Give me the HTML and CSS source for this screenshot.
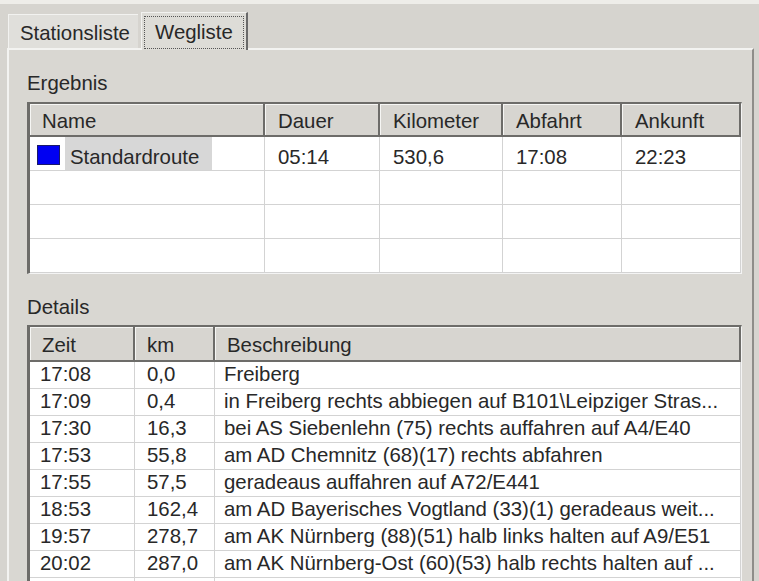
FILE: index.html
```html
<!DOCTYPE html>
<html lang="de">
<head>
<meta charset="utf-8">
<title>Wegliste</title>
<link rel="stylesheet" href="styles.css">
</head>
<body>
<div class="window">
  <div class="tabs">
    <div class="tab">Stationsliste</div>
    <div class="tab active"><span class="focus">Wegliste</span></div>
  </div>
  <div class="panel">
    <div class="label first">Ergebnis</div>
    <div class="list result">
      <div class="hd">Name</div>
      <div class="hd">Dauer</div>
      <div class="hd">Kilometer</div>
      <div class="hd">Abfahrt</div>
      <div class="hd">Ankunft</div>

      <div class="cell namecell"><span class="swatch"></span><span class="sel">Standardroute</span></div>
      <div class="cell">05:14</div>
      <div class="cell">530,6</div>
      <div class="cell">17:08</div>
      <div class="cell">22:23</div>

      <div class="cell"></div><div class="cell"></div><div class="cell"></div><div class="cell"></div><div class="cell"></div>
      <div class="cell"></div><div class="cell"></div><div class="cell"></div><div class="cell"></div><div class="cell"></div>
      <div class="cell"></div><div class="cell"></div><div class="cell"></div><div class="cell"></div><div class="cell"></div>
    </div>

    <div class="label">Details</div>
    <div class="list details">
      <div class="hd">Zeit</div>
      <div class="hd">km</div>
      <div class="hd">Beschreibung</div>

      <div class="cell">17:08</div><div class="cell">0,0</div><div class="cell">Freiberg</div>
      <div class="cell">17:09</div><div class="cell">0,4</div><div class="cell">in Freiberg rechts abbiegen auf B101\Leipziger Stras...</div>
      <div class="cell">17:30</div><div class="cell">16,3</div><div class="cell">bei AS Siebenlehn (75) rechts auffahren auf A4/E40</div>
      <div class="cell">17:53</div><div class="cell">55,8</div><div class="cell">am AD Chemnitz (68)(17) rechts abfahren</div>
      <div class="cell">17:55</div><div class="cell">57,5</div><div class="cell">geradeaus auffahren auf A72/E441</div>
      <div class="cell">18:53</div><div class="cell">162,4</div><div class="cell">am AD Bayerisches Vogtland (33)(1) geradeaus weit...</div>
      <div class="cell">19:57</div><div class="cell">278,7</div><div class="cell">am AK Nürnberg (88)(51) halb links halten auf A9/E51</div>
      <div class="cell">20:02</div><div class="cell">287,0</div><div class="cell">am AK Nürnberg-Ost (60)(53) halb rechts halten auf ...</div>
      <div class="cell"></div><div class="cell"></div><div class="cell"></div>
    </div>
  </div>
</div>
</body>
</html>
```

FILE: styles.css
```css
html, body {
  margin: 0;
  padding: 0;
}
body {
  width: 759px;
  height: 581px;
  overflow: hidden;
  background: #d6d4cf;
  font-family: "Liberation Sans", Arial, sans-serif;
  font-size: 20.4px;
  color: #282828;
}
.window {
  height: 581px;
  display: flex;
  flex-direction: column;
  border-top: 4px solid #eeede9;
  box-sizing: border-box;
}
.tabs {
  display: flex;
  align-items: flex-end;
  height: 44px;
  padding-left: 8px;
  position: relative;
  z-index: 1;
}
.tab {
  height: 34px;
  line-height: 37px;
  padding: 0 9px 0 11px;
  background: #e0dfdb;
  border-top: 1px solid #f2f2f0;
  border-left: 1px solid #f2f2f0;
  box-sizing: border-box;
  width: 130px;
}
.tab.active {
  height: 38px;
  width: 107px;
  margin-left: 3px;
  margin-bottom: -2px;
  padding: 3px 2px 2px 2px;
  background: #dddcd7;
  border-right: 2px solid #6a6a6a;
  line-height: 30px;
}
.focus {
  display: block;
  height: 33px;
  box-sizing: border-box;
  border: 1px dotted #555;
  padding-left: 10px;
}
.panel {
  flex: 1;
  margin: 0 5px 0 7px;
  background: #d9d7d2;
  border-top: 2px solid #f3f3f1;
  border-left: 2px solid #f3f3f1;
  border-right: 2px solid #8e8d89;
  padding: 0 10px 0 18px;
  overflow: hidden;
}
.label {
  height: 26px;
  line-height: 26px;
  margin-top: 20px;
  margin-bottom: 5px;
}
.label.first {
  margin-top: 20px;
  margin-bottom: 6px;
}
.list {
  display: grid;
  background: #ffffff;
  border-top: 2px solid #6d6c69;
  border-left: 3px solid #6d6c69;
  border-right: 1px solid #f4f4f4;
  border-bottom: 1px solid #f4f4f4;
}
.result {
  grid-template-columns: 235px 115px 123px 119px 119px;
  grid-auto-rows: 34px;
  grid-template-rows: 33px;
}
.details {
  grid-template-columns: 105px 80px 526px;
  grid-auto-rows: 27px;
  grid-template-rows: 35px;
}
.hd {
  background: #d7d5d0;
  border-right: 2px solid #6d6c69;
  border-bottom: 2px solid #6d6c69;
  box-shadow: inset 1px 1px 0 #f6f6f4;
  padding-left: 13px;
  line-height: 35px;
  white-space: nowrap;
  overflow: hidden;
}
.result .hd:first-child {
  padding-left: 12px;
}
.details .hd {
  padding-left: 12px;
  line-height: 36px;
}
.cell {
  border-right: 1px solid #d3d3d3;
  border-bottom: 1px solid #d3d3d3;
  padding-left: 13px;
  white-space: nowrap;
  overflow: hidden;
}
.result .cell {
  line-height: 41px;
}
.details .cell {
  line-height: 24px;
  padding-left: 9px;
}
.details .cell:nth-child(3n+2) {
  padding-left: 12px;
}
.details .cell:nth-child(3n+1) {
  padding-left: 10px;
}
.namecell {
  display: flex;
  align-items: center;
  padding-left: 7px;
}
.swatch {
  width: 23px;
  height: 20px;
  box-sizing: border-box;
  background: #0000f2;
  border: 1px solid #1a1a6a;
  margin-right: 5px;
  margin-top: 3px;
}
.sel {
  background: #d7d7d7;
  height: 100%;
  width: 147px;
  box-sizing: border-box;
  padding-left: 5px;
  line-height: 41px;
}
```
